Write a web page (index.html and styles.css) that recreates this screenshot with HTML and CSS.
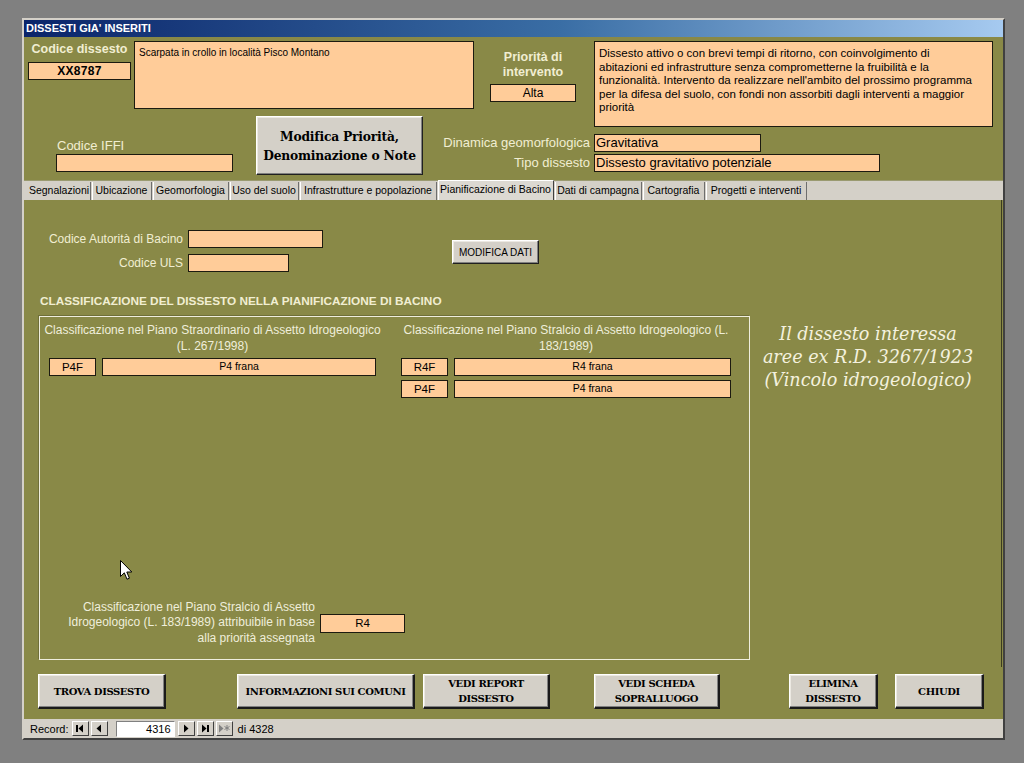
FILE: index.html
```html
<!DOCTYPE html>
<html lang="it">
<head>
<meta charset="utf-8">
<title>DISSESTI GIA' INSERITI</title>
<link rel="stylesheet" href="styles.css">
</head>
<body>
<div class="window">
  <div class="titlebar">DISSESTI GIA' INSERITI</div>
  <div class="form">
    <div class="header">
      <div class="hl">
        <div class="hl-row1">
          <div class="code-col">
            <div class="lbl-bold">Codice dissesto</div>
            <div class="field code">XX8787</div>
          </div>
          <div class="field desc">Scarpata in crollo in località Pisco Montano</div>
        </div>
        <div class="hl-row2">
          <div class="iffi-col">
            <div class="lbl">Codice IFFI</div>
            <div class="field iffi"></div>
          </div>
          <div class="btn big">Modifica Priorità,<br>Denominazione o Note</div>
        </div>
      </div>
      <div class="hr">
        <div class="hr-row1">
          <div class="prio-col">
            <div class="lbl-bold prio">Priorità di<br>intervento</div>
            <div class="field alta">Alta</div>
          </div>
          <div class="field note">Dissesto attivo o con brevi tempi di ritorno, con coinvolgimento di<br>abitazioni ed infrastrutture senza comprometterne la fruibilità e la<br>funzionalità. Intervento da realizzare nell'ambito del prossimo programma<br>per la difesa del suolo, con fondi non assorbiti dagli interventi a maggior<br>priorità</div>
        </div>
        <div class="hr-row2">
          <div class="lbl right">Dinamica geomorfologica</div>
          <div class="field big-text dinamica">Gravitativa</div>
          <div class="lbl right">Tipo dissesto</div>
          <div class="field big-text tipo">Dissesto gravitativo potenziale</div>
        </div>
      </div>
    </div>

    <div class="tabs">
      <div class="tab">Segnalazioni</div>
      <div class="tab">Ubicazione</div>
      <div class="tab">Geomorfologia</div>
      <div class="tab">Uso del suolo</div>
      <div class="tab">Infrastrutture e popolazione</div>
      <div class="tab active">Pianificazione di Bacino</div>
      <div class="tab">Dati di campagna</div>
      <div class="tab">Cartografia</div>
      <div class="tab">Progetti e interventi</div>
    </div>

    <div class="page">
      <div class="codes-row">
        <div class="codes">
          <div class="lbl-s right">Codice Autorità di Bacino</div>
          <div class="field autorita"></div>
          <div class="lbl-s right">Codice ULS</div>
          <div class="field uls"></div>
        </div>
        <div class="btn small">MODIFICA DATI</div>
      </div>

      <div class="section-title">CLASSIFICAZIONE DEL DISSESTO NELLA PIANIFICAZIONE DI BACINO</div>

      <div class="class-row">
        <div class="frame">
          <div class="frame-cols">
            <div class="fcol left">
              <div class="fhead">Classificazione nel Piano Straordinario di Assetto Idrogeologico<br>(L. 267/1998)</div>
              <div class="pair">
                <div class="field sm codebox">P4F</div>
                <div class="field sm namebox">P4 frana</div>
              </div>
            </div>
            <div class="fcol right-col">
              <div class="fhead">Classificazione nel Piano Stralcio di Assetto Idrogeologico (L.<br>183/1989)</div>
              <div class="pair">
                <div class="field sm codebox">R4F</div>
                <div class="field sm namebox">R4 frana</div>
              </div>
              <div class="pair">
                <div class="field sm codebox">P4F</div>
                <div class="field sm namebox">P4 frana</div>
              </div>
            </div>
          </div>
          <div class="frame-bottom">
            <div class="attr-label">Classificazione nel Piano Stralcio di Assetto<br>Idrogeologico (L. 183/1989) attribuibile in base<br>alla priorità assegnata</div>
            <div class="field sm r4">R4</div>
          </div>
        </div>
        <div class="vincolo">Il dissesto interessa<br>aree ex R.D. 3267/1923<br>(Vincolo idrogeologico)</div>
      </div>

      <svg class="cursor" width="13" height="21" viewBox="0 0 13 21">
        <path d="M0.5 0.5 L0.5 16.5 L4.3 12.8 L7 19.2 L9.4 18.2 L6.8 12 L11.8 12 Z" fill="#ffffff" stroke="#000000" stroke-width="1"/>
      </svg>
    </div>

    <div class="buttons">
      <div class="btn cmd trova">TROVA DISSESTO</div>
      <div class="btn cmd info">INFORMAZIONI SUI COMUNI</div>
      <div class="btn cmd report">VEDI REPORT<br>DISSESTO</div>
      <div class="btn cmd scheda">VEDI SCHEDA<br>SOPRALLUOGO</div>
      <div class="btn cmd elimina">ELIMINA<br>DISSESTO</div>
      <div class="btn cmd chiudi">CHIUDI</div>
    </div>
  </div>

  <div class="recordbar">
    <span class="rec-lbl">Record:</span>
    <div class="navbtn first"><svg width="10" height="9" viewBox="0 0 10 9"><rect x="1" y="1" width="2" height="7" fill="#000"/><path d="M8 0.5 L3.5 4.5 L8 8.5 Z" fill="#000"/></svg></div>
    <div class="navbtn"><svg width="10" height="9" viewBox="0 0 10 9"><path d="M7 0.5 L2.5 4.5 L7 8.5 Z" fill="#000"/></svg></div>
    <div class="recinput">4316</div>
    <div class="navbtn"><svg width="10" height="9" viewBox="0 0 10 9"><path d="M3 0.5 L7.5 4.5 L3 8.5 Z" fill="#000"/></svg></div>
    <div class="navbtn"><svg width="10" height="9" viewBox="0 0 10 9"><path d="M2 0.5 L6.5 4.5 L2 8.5 Z" fill="#000"/><rect x="7" y="1" width="2" height="7" fill="#000"/></svg></div>
    <div class="navbtn disabled"><svg width="12" height="9" viewBox="0 0 12 9"><path d="M1 0.5 L5.5 4.5 L1 8.5 Z" fill="#808080"/><path d="M9 1 L9 7 M6.5 2.5 L11.5 5.5 M11.5 2.5 L6.5 5.5" stroke="#808080" stroke-width="1"/></svg></div>
    <span class="rec-of">di 4328</span>
  </div>
</div>
</body>
</html>
```

FILE: styles.css
```css
* { box-sizing: border-box; }

html, body {
  margin: 0;
  padding: 0;
}

body {
  background: #808080;
  width: 1024px;
  height: 763px;
  overflow: hidden;
  font-family: "Liberation Sans", Arial, sans-serif;
  padding-top: 18px;
  padding-left: 22px;
}

.window {
  width: 983px;
  background: #d4d0c8;
  border-top: 2px solid #d4d0c8;
  border-left: 2px solid #d4d0c8;
  border-right: 2px solid #404040;
  border-bottom: 2px solid #404040;
  box-shadow: inset -1px -1px 0 #808080, inset 1px 1px 0 #ffffff;
}

.titlebar {
  height: 17px;
  line-height: 17px;
  padding-left: 2px;
  color: #ffffff;
  font-weight: bold;
  font-size: 11px;
  background: linear-gradient(to right, #0a246a 0%, #3a6ea5 55%, #a6caf0 100%);
}

.form {
  background: #898947;
  height: 682px;
  display: flex;
  flex-direction: column;
}

/* ---------- fields & labels ---------- */
.field {
  background: #ffcc99;
  border: 1px solid #1c1a10;
  color: #000;
  font-size: 11px;
}

.lbl-bold {
  color: #f1eed2;
  font-weight: bold;
  font-size: 12.5px;
}

.lbl {
  color: #f1eed2;
  font-size: 13px;
  white-space: nowrap;
}

.lbl-s {
  color: #f1eed2;
  font-size: 12px;
  white-space: nowrap;
}

.right { text-align: right; }

/* ---------- header ---------- */
.header {
  height: 143px;
  display: flex;
}

.hl {
  width: 456px;
  display: flex;
  flex-direction: column;
}

.hl-row1 {
  display: flex;
  padding-top: 4px;
}

.code-col {
  margin-left: 4px;
  width: 103px;
  display: flex;
  flex-direction: column;
}

.code-col .lbl-bold {
  line-height: 17px;
  text-align: center;
}

.field.code {
  margin-top: 4px;
  height: 18px;
  line-height: 16px;
  text-align: center;
  font-weight: bold;
  font-size: 12px;
  letter-spacing: 0.3px;
}

.field.desc {
  margin-left: 3px;
  width: 340px;
  height: 68px;
  padding: 4px 4px;
  font-size: 10px;
  line-height: 13px;
}

.hl-row2 {
  display: flex;
  margin-top: 7px;
}

.iffi-col {
  margin-left: 32px;
  width: 177px;
  display: flex;
  flex-direction: column;
}

.iffi-col .lbl {
  margin-top: 22px;
  line-height: 16px;
  padding-left: 1px;
}

.field.iffi {
  height: 18px;
}

.btn {
  background: #d4d0c8;
  color: #000;
  border-top: 1px solid #ffffff;
  border-left: 1px solid #ffffff;
  border-right: 1px solid #202020;
  border-bottom: 1px solid #202020;
  box-shadow: inset -1px -1px 0 #808080, inset 1px 1px 0 #ece9e2;
  display: flex;
  align-items: center;
  justify-content: center;
  text-align: center;
}

.btn.big {
  margin-left: 23px;
  width: 167px;
  height: 59px;
  font-family: "DejaVu Serif", "Liberation Serif", serif;
  font-weight: bold;
  font-size: 12.3px;
  line-height: 19px;
  letter-spacing: -0.2px;
}

.hr {
  flex: 1;
  display: flex;
  flex-direction: column;
}

.hr-row1 {
  display: flex;
  padding-top: 4px;
}

.prio-col {
  margin-left: 10px;
  width: 86px;
  display: flex;
  flex-direction: column;
}

.lbl-bold.prio {
  margin-top: 9px;
  line-height: 15px;
  text-align: center;
}

.field.alta {
  margin-top: 4px;
  height: 18px;
  line-height: 16px;
  text-align: center;
  font-size: 12px;
}

.field.note {
  margin-left: 18px;
  width: 399px;
  height: 86px;
  padding: 5px 4px 0 4px;
  font-size: 11.5px;
  line-height: 13.6px;
  white-space: nowrap;
  overflow: hidden;
}

.hr-row2 {
  margin-top: 7px;
  margin-left: -40px;
  display: grid;
  grid-template-columns: 150px auto;
  column-gap: 4px;
  row-gap: 2px;
  justify-items: start;
}

.hr-row2 .lbl {
  justify-self: end;
  line-height: 18px;
}

.field.big-text {
  height: 18px;
  line-height: 16px;
  font-size: 13px;
  padding-left: 1px;
}

.field.dinamica { width: 167px; }
.field.tipo { width: 286px; }

/* ---------- tabs ---------- */
.tabs {
  height: 20px;
  background: #d4d0c8;
  display: flex;
  align-items: flex-end;
  padding-left: 4px;
  border-top: 1px solid #9a9a70;
}

.tab {
  height: 18px;
  line-height: 17px;
  font-size: 10.5px;
  color: #000;
  text-align: center;
  white-space: nowrap;
  border-right: 1px solid #6e6e6e;
  box-shadow: inset 1px 0 0 #ffffff;
  margin-right: 1px;
}

.tab:nth-child(1) { width: 63px; box-shadow: none; }
.tab:nth-child(2) { width: 60px; }
.tab:nth-child(3) { width: 76px; }
.tab:nth-child(4) { width: 69px; }
.tab:nth-child(5) { width: 137px; }
.tab:nth-child(6) { width: 116px; }
.tab:nth-child(7) { width: 87px; }
.tab:nth-child(8) { width: 62px; }
.tab:nth-child(9) { width: 101px; }

.tab.active {
  height: 20px;
  line-height: 16px;
  background: #dcd9d2;
  border-top: 1px solid #ffffff;
  border-right: 1px solid #404040;
  box-shadow: inset 1px 0 0 #ffffff;
}

/* ---------- page ---------- */
.page {
  position: relative;
  height: 467px;
  border-right: 1px solid #3c3c20;
  margin-right: 1px;
  display: flex;
  flex-direction: column;
}

.codes-row {
  display: flex;
  padding-top: 30px;
}

.codes {
  display: grid;
  grid-template-columns: 159px auto;
  column-gap: 5px;
  row-gap: 6px;
  justify-items: start;
}

.codes .lbl-s {
  justify-self: end;
  line-height: 18px;
}

.field.autorita { width: 135px; height: 18px; }
.field.uls { width: 101px; height: 18px; }

.btn.small {
  margin-left: 129px;
  margin-top: 10px;
  width: 87px;
  height: 24px;
  font-size: 10px;
}

.section-title {
  margin-top: 22px;
  padding-left: 16px;
  line-height: 14px;
  font-size: 11.8px;
  font-weight: bold;
  color: #f1eed2;
}

.class-row {
  display: flex;
  margin-top: 8px;
}

.frame {
  margin-left: 15px;
  width: 711px;
  height: 344px;
  border: 1px solid #efeedd;
  box-shadow: -1px -1px 0 #6f6f38;
  display: flex;
  flex-direction: column;
}

.frame-cols {
  display: flex;
  padding-left: 9px;
}

.fcol.left { width: 327px; }
.fcol.right-col { width: 330px; margin-left: 25px; }

.fhead {
  margin: 5px -12px 0 -12px;
  color: #efeedb;
  font-size: 12px;
  line-height: 16px;
  text-align: center;
  white-space: nowrap;
}

.pair {
  display: flex;
  gap: 6px;
  margin-top: 4px;
}

.field.sm {
  height: 18px;
  line-height: 16px;
  text-align: center;
  font-size: 11.5px;
}

.field.namebox { font-size: 10.5px; line-height: 14px; }

.field.codebox { width: 47px; }
.fcol.left .namebox { width: 274px; }
.fcol.right-col .namebox { width: 277px; }

.frame-bottom {
  margin-top: auto;
  padding-bottom: 13px;
  display: flex;
  align-items: center;
}

.attr-label {
  width: 275px;
  text-align: right;
  color: #efeedb;
  font-size: 12px;
  line-height: 15.5px;
  white-space: nowrap;
}

.field.r4 {
  margin-left: 5px;
  width: 85px;
  height: 19px;
  margin-top: 2px;
}

.vincolo {
  width: 236px;
  padding-top: 7px;
  text-align: center;
  color: #f4f1de;
  font-family: "DejaVu Serif", "Liberation Serif", serif;
  font-style: italic;
  font-size: 17.6px;
  line-height: 23px;
  white-space: nowrap;
}

.cursor {
  position: absolute;
  left: 96px;
  top: 360px;
}

/* ---------- bottom buttons ---------- */
.buttons {
  display: flex;
  padding-top: 7px;
}

.btn.cmd {
  height: 35px;
  font-family: "DejaVu Serif", "Liberation Serif", serif;
  font-weight: bold;
  font-size: 10px;
  line-height: 15px;
  letter-spacing: -0.4px;
  border-right: 2px solid #1a1a1a;
  border-bottom: 2px solid #1a1a1a;
}

.btn.trova { margin-left: 14px; width: 128px; }
.btn.info { margin-left: 71px; width: 178px; }
.btn.report { margin-left: 8px; width: 127px; }
.btn.scheda { margin-left: 44px; width: 126px; }
.btn.elimina { margin-left: 69px; width: 89px; }
.btn.chiudi { margin-left: 17px; width: 89px; }

/* ---------- record bar ---------- */
.recordbar {
  height: 19px;
  background: #d4d0c8;
  display: flex;
  align-items: center;
  font-size: 11px;
  color: #000;
  padding-left: 6px;
}

.rec-lbl { margin-right: 3px; }

.navbtn {
  width: 17px;
  height: 15px;
  background: #d4d0c8;
  border-top: 1px solid #ffffff;
  border-left: 1px solid #ffffff;
  border-right: 1px solid #404040;
  border-bottom: 1px solid #404040;
  display: flex;
  align-items: center;
  justify-content: center;
  margin-right: 2px;
}

.recinput {
  margin-left: 6px;
  margin-right: 3px;
  width: 59px;
  height: 16px;
  background: #ffffff;
  border-top: 1px solid #808080;
  border-left: 1px solid #808080;
  border-right: 1px solid #ffffff;
  border-bottom: 1px solid #ffffff;
  text-align: right;
  padding-right: 3px;
  line-height: 14px;
}

.rec-of { margin-left: 3px; }
```
